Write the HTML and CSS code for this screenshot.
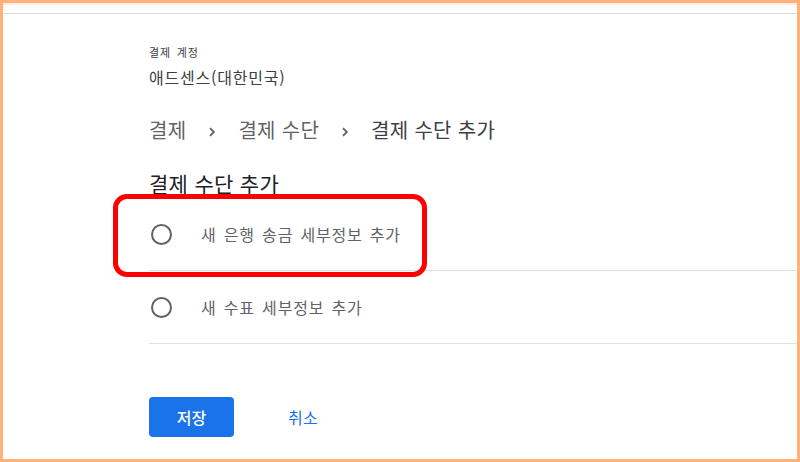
FILE: index.html
```html
<!DOCTYPE html>
<html lang="ko">
<head>
<meta charset="UTF-8">
<title>결제 수단 추가</title>
<link rel="stylesheet" href="styles.css">
</head>
<body>
<div class="frame">
	<div class="topbar"></div>

	<div class="page">
		<div class="account">
			<div class="account-label">결제 계정</div>
			<div class="account-name">애드센스(대한민국)</div>
		</div>

		<div class="crumbs">
			<span>결제</span>
			<svg class="sep" width="8" height="10" viewBox="0 0 8 10"><path d="M2 1.2l3.8 3.8-3.8 3.8" fill="none" stroke="#5f6368" stroke-width="1.8"/></svg>
			<span>결제 수단</span>
			<svg class="sep" width="8" height="10" viewBox="0 0 8 10"><path d="M2 1.2l3.8 3.8-3.8 3.8" fill="none" stroke="#5f6368" stroke-width="1.8"/></svg>
			<span class="current">결제 수단 추가</span>
		</div>

		<h1 class="title">결제 수단 추가</h1>

		<div class="options">
			<label class="option marked">
				<span class="radio"></span>
				<span class="option-text">새 은행 송금 세부정보 추가</span>
				<span class="mark"></span>
			</label>
			<label class="option">
				<span class="radio"></span>
				<span class="option-text">새 수표 세부정보 추가</span>
			</label>
		</div>

		<div class="actions">
			<button class="btn-save">저장</button>
			<button class="btn-cancel">취소</button>
		</div>
	</div>
</div>
</body>
</html>
```

FILE: styles.css
```css
*{
	margin: 0;
	padding: 0;
	box-sizing: border-box;
}
html,body{
	width: 100%;
	height: 100%;
}
body{
	background: #fff;
	font-family: "Noto Sans CJK KR", "Noto Sans", sans-serif;
	color: #3c4043;
}

.frame{
	height: 462px;
	border: 3px solid #ffb27a;
	background: #fff;
	overflow: hidden;
}

/* strip of the header left above the page */
.topbar{
	height: 11px;
	border-top: 2px solid #fdeeea;
	border-bottom: 1px solid #dadce0;
}

.page{
	padding-left: 146px;
}

.account{
	padding-top: 30px;
}
.account-label{
	font-size: 11px;
	line-height: 16px;
	color: #3c4043;
	letter-spacing: 0.8px;
	word-spacing: 2px;
}
.account-name{
	margin-top: 6px;
	font-size: 16px;
	line-height: 22px;
	color: #3c4043;
	letter-spacing: 0.8px;
}

.crumbs{
	margin-top: 28px;
	display: flex;
	align-items: center;
	gap: 22px;
	font-size: 20px;
	line-height: 28px;
	color: #5f6368;
	letter-spacing: 0.3px;
}
.crumbs .sep{
	margin-top: 3px;
}
.crumbs .current{
	color: #3c4043;
}

.title{
	margin-top: 25px;
	font-size: 21px;
	font-weight: 400;
	line-height: 28px;
	color: #202124;
	letter-spacing: 0.3px;
}

.options{
	margin-top: 1px;
}
.option{
	position: relative;
	display: flex;
	align-items: center;
	height: 73px;
	border-bottom: 1px solid #e0e0e0;
	cursor: pointer;
}
.radio{
	width: 21px;
	height: 21px;
	margin-left: 2px;
	border: 2px solid #5f6368;
	border-radius: 50%;
}
.option-text{
	margin-left: 29px;
	font-size: 16px;
	color: #5f6368;
	letter-spacing: 0.8px;
	word-spacing: 2px;
}

/* red highlight drawn over the first choice */
.mark{
	position: absolute;
	left: -36px;
	top: -4px;
	width: 314px;
	height: 83px;
	border: 5px solid #ff0000;
	border-radius: 14px;
	pointer-events: none;
}

.actions{
	margin-top: 53px;
	display: flex;
	align-items: center;
	gap: 36px;
}
.btn-save{
	width: 85px;
	height: 40px;
	border: none;
	border-radius: 4px;
	background: #1a73e8;
	color: #fff;
	font-family: inherit;
	font-size: 16px;
	font-weight: 500;
	cursor: pointer;
}
.btn-cancel{
	padding: 0 18px;
	height: 40px;
	border: none;
	background: none;
	color: #1a73e8;
	font-family: inherit;
	font-size: 16px;
	letter-spacing: 0.4px;
	cursor: pointer;
}
```
